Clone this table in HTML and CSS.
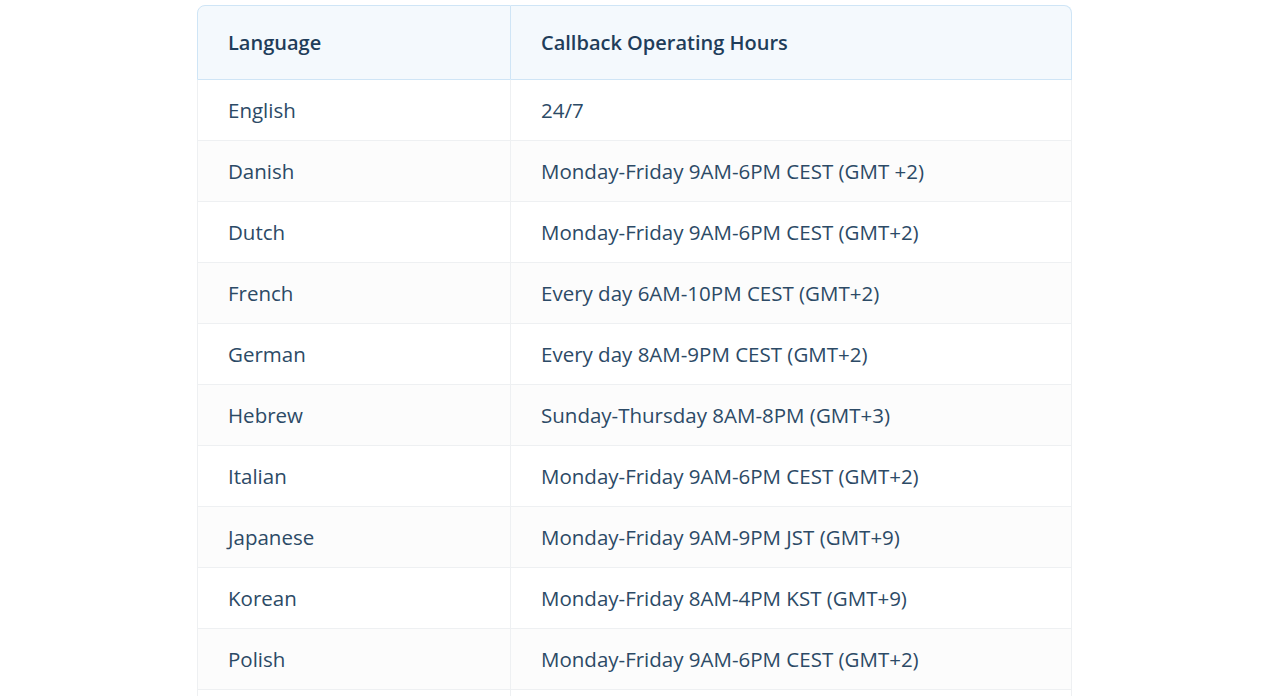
FILE: index.html
```html
<!DOCTYPE html>
<html>
<head>
<meta charset="utf-8">
<link rel="stylesheet" href="styles.css">
</head>
<body>
<div class="wrap">
  <table class="hours">
    <thead>
      <tr><th class="c1">Language</th><th class="c2">Callback Operating Hours</th></tr>
    </thead>
    <tbody>
      <tr><td class="c1">English</td><td>24/7</td></tr>
      <tr><td class="c1">Danish</td><td>Monday-Friday 9AM-6PM CEST (GMT +2)</td></tr>
      <tr><td class="c1">Dutch</td><td>Monday-Friday 9AM-6PM CEST (GMT+2)</td></tr>
      <tr><td class="c1">French</td><td>Every day 6AM-10PM CEST (GMT+2)</td></tr>
      <tr><td class="c1">German</td><td>Every day 8AM-9PM CEST (GMT+2)</td></tr>
      <tr><td class="c1">Hebrew</td><td>Sunday-Thursday 8AM-8PM (GMT+3)</td></tr>
      <tr><td class="c1">Italian</td><td>Monday-Friday 9AM-6PM CEST (GMT+2)</td></tr>
      <tr><td class="c1">Japanese</td><td>Monday-Friday 9AM-9PM JST (GMT+9)</td></tr>
      <tr><td class="c1">Korean</td><td>Monday-Friday 8AM-4PM KST (GMT+9)</td></tr>
      <tr><td class="c1">Polish</td><td>Monday-Friday 9AM-6PM CEST (GMT+2)</td></tr>
      <tr><td class="c1"></td><td></td></tr>
    </tbody>
  </table>
</div>
</body>
</html>
```
FILE: styles.css
```css
html, body {
  margin: 0;
  background: #ffffff;
  overflow: hidden;
}
.wrap {
  padding: 5px 0 0 197px;
}
.hours {
  width: 875px;
  border-collapse: separate;
  border-spacing: 0;
  font-family: "Open Sans", sans-serif;
  font-size: 20.5px;
  color: #2c4a66;
  table-layout: fixed;
}
.hours th {
  height: 75px;
  background: #f4f9fd;
  border-top: 1px solid #cfe5f6;
  border-bottom: 1px solid #cfe5f6;
  text-align: left;
  font-size: 20px;
  font-weight: 600;
  color: #1f3d5a;
  padding: 0 0 1px 30px;
  box-sizing: border-box;
}
.hours th.c1 {
  width: 314px;
  border-left: 1px solid #cfe5f6;
  border-right: 1px solid #cfe5f6;
  border-top-left-radius: 8px;
}
.hours th.c2 {
  border-right: 1px solid #cfe5f6;
  border-top-right-radius: 8px;
}
.hours td {
  height: 61px;
  box-sizing: border-box;
  padding: 0 0 0 30px;
  border-bottom: 1px solid #eef0f2;
  border-right: 1px solid #eef0f2;
  font-weight: 400;
}
.hours td.c1 {
  border-left: 1px solid #eef0f2;
}
.hours tbody tr:nth-child(even) td {
  background: #fcfcfc;
}
```
